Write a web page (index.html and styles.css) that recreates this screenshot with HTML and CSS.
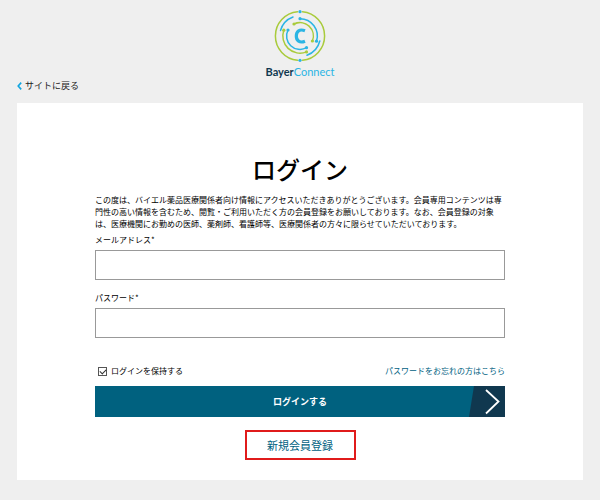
FILE: index.html
```html
<!DOCTYPE html>
<html lang="ja">
<head>
  <meta charset="UTF-8">
  <meta name="viewport" content="width=device-width, initial-scale=1.0">
  <title>ログイン | BayerConnect</title>
  <link rel="stylesheet" href="styles.css">
</head>
<body>
  <header class="header">
    <div class="brand">
      <svg class="brand-mark" viewBox="0 0 52 52" fill="none" stroke-width="1.5" stroke-linecap="round" aria-hidden="true">
        <g stroke="#a9cb3c">
          <path d="M28.5 1.8A24.3 24.3 0 0 1 28.5 50.2"/>
          <path d="M23.5 50.2A24.3 24.3 0 0 1 23.5 1.8"/>
          <path d="M20 14A13.4 13.4 0 0 1 38.4 31"/>
          <path d="M9.8 20.2A17.2 17.2 0 0 0 32.5 41.9"/>
        </g>
        <g stroke="#2bb5e4">
          <path d="M6.5 20.5A20.3 20.3 0 0 1 19 7"/>
          <path d="M45.8 31A20.4 20.4 0 0 1 33 45.2"/>
          <path d="M26 8.7A17.3 17.3 0 0 1 42.5 31.2"/>
          <path d="M14 20A13.4 13.4 0 0 0 32.5 37.7"/>
        </g>
        <path stroke="#2bb5e4" stroke-width="3.2" stroke-linecap="butt" d="M31 20.8C25.500 18.600 22.300 21.300 22.300 26C22.300 30.700 25.500 33.400 31 31.200"/>
        <g fill="#2bb5e4">
          <circle cx="26" cy="1.7" r="1.6"/>
          <circle cx="26" cy="50.3" r="1.6"/>
          <circle cx="26" cy="8.7" r="1.6"/>
          <circle cx="42.5" cy="31.2" r="1.6"/>
          <circle cx="14" cy="20" r="1.6"/>
          <circle cx="32.5" cy="37.7" r="1.6"/>
        </g>
        <g fill="#a9cb3c">
          <circle cx="20" cy="14" r="1.6"/>
          <circle cx="38.4" cy="31" r="1.6"/>
          <circle cx="9.8" cy="20.2" r="1.6"/>
          <circle cx="32.5" cy="41.9" r="1.6"/>
        </g>
      </svg>
      <div class="brand-name">Bayer<span>Connect</span></div>
    </div>
    <a class="back" href="#">
      <svg class="back-icon" viewBox="0 0 5 8" fill="none" stroke="#10a5e0" stroke-width="1.6" aria-hidden="true"><path d="M4.2 .6L1.2 4L4.2 7.4"/></svg>
      サイトに戻る
    </a>
  </header>

  <main class="card">
    <h1>ログイン</h1>
    <p class="lead">この度は、バイエル薬品医療関係者向け情報にアクセスいただきありがとうございます。会員専用コンテンツは専門性の高い情報を含むため、閲覧・ご利用いただく方の会員登録をお願いしております。なお、会員登録の対象は、医療機関にお勤めの医師、薬剤師、看護師等、医療関係者の方々に限らせていただいております。</p>
    <form>
      <label class="field-label" for="email">メールアドレス*</label>
      <input class="field" type="email" id="email" name="email">
      <label class="field-label" for="password">パスワード*</label>
      <input class="field" type="password" id="password" name="password">
      <div class="options">
        <div class="remember">
          <input type="checkbox" id="remember" name="remember" checked>
          <label for="remember">ログインを保持する</label>
        </div>
        <a href="#">パスワードをお忘れの方はこちら</a>
      </div>
      <button class="submit" type="submit">
        <span>ログインする</span>
        <svg class="submit-arrow" viewBox="0 0 36 31" fill="none" aria-hidden="true">
          <path fill="#10384f" d="M5 0H36V31H0Z"/>
          <path stroke="#fff" stroke-width="1.8" d="M17 4L29.5 15.5L17 27.5"/>
        </svg>
      </button>
    </form>
    <a class="register" href="#">新規会員登録</a>
  </main>
</body>
</html>
```

FILE: styles.css
```css
* {
  box-sizing: border-box;
}

body {
  margin: 0;
  padding: 10px 17px 20px;
  background: #efefef;
  color: #000;
  font-family: "Noto Sans CJK JP", sans-serif;
  font-size: 8px;
  line-height: 12px;
}

a {
  color: #00617f;
  text-decoration: none;
}

.header {
  margin-bottom: 10px;
}

.brand {
  display: flex;
  flex-direction: column;
  align-items: center;
}

.brand-mark {
  width: 52px;
  height: 52px;
}

.brand-name {
  margin-top: 2px;
  color: #10384f;
  font-family: Lato, sans-serif;
  font-size: 11px;
  font-weight: 700;
  line-height: 16px;
}

.brand-name span {
  color: #2bb5e4;
  font-weight: 400;
}

.back {
  display: inline-flex;
  align-items: center;
  gap: 3px;
  color: #222;
  font-size: 9px;
}

.back-icon {
  width: 5px;
  height: 8px;
}

.card {
  display: flex;
  flex-direction: column;
  padding: 48px 78px 20px;
  background: #fff;
}

h1 {
  margin: 0 0 7px;
  font-size: 24px;
  font-weight: 500;
  line-height: 36px;
  text-align: center;
}

.lead {
  margin: 0;
}

.field-label {
  display: block;
  margin: 4px 0;
}

.field {
  display: block;
  width: 100%;
  height: 30px;
  margin-bottom: 12px;
  padding: 0 8px;
  border: 1px solid #999;
  border-radius: 0;
  background: #fff;
  font: inherit;
}

.options {
  display: flex;
  justify-content: space-between;
  margin: 27px 0 9px;
}

.remember {
  display: flex;
  align-items: center;
  gap: 4px;
  padding-left: 3px;
}

.remember input {
  appearance: none;
  width: 9px;
  height: 9px;
  margin: 0;
  border: 1px solid #555;
  background: #fff;
}

.remember input:checked::before {
  content: "";
  display: block;
  width: 5px;
  height: 3px;
  margin: 1px;
  border: solid #333;
  border-width: 0 0 1px 1px;
  transform: rotate(-45deg);
}

.submit {
  display: flex;
  align-items: center;
  justify-content: center;
  position: relative;
  width: 100%;
  height: 31px;
  padding: 0;
  border: 0;
  background: #00617f;
  color: #fff;
  font: bold 9px "Noto Sans CJK JP", sans-serif;
}

.submit-arrow {
  position: absolute;
  top: 0;
  right: 0;
  height: 100%;
}

.register {
  align-self: center;
  width: 111px;
  margin-top: 13px;
  border: 2px solid #e01b1b;
  font-size: 11px;
  line-height: 26px;
  text-align: center;
}
```
